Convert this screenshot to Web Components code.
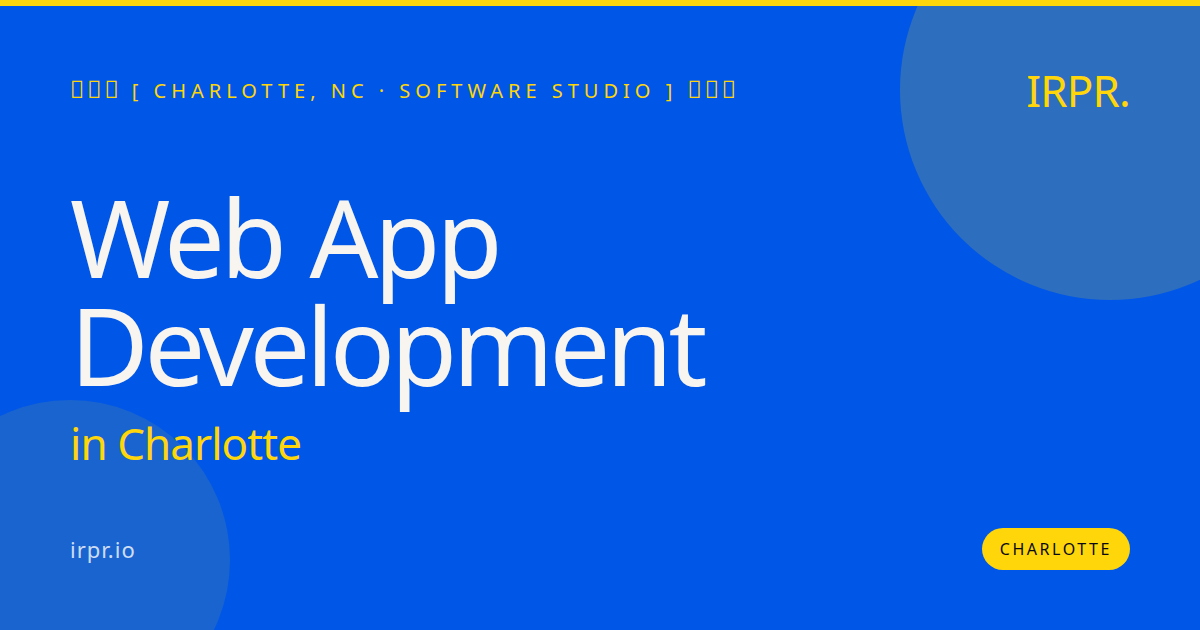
<!DOCTYPE html>
<html>
<head>
<meta charset="utf-8">
<style>
  html, body { margin: 0; padding: 0; }
  body { width: 1200px; height: 630px; overflow: hidden; font-family: "Noto Sans", sans-serif; }
</style>
</head>
<body>
<og-card>
  <og-eyebrow slot="eyebrow"><span>&#xE000;&#xE000;&#xE000;</span> [ CHARLOTTE, NC · SOFTWARE STUDIO ] <span>&#xE000;&#xE000;&#xE000;</span></og-eyebrow>
  <og-logo slot="logo">IRPR.</og-logo>
  <og-title slot="title" sub="in Charlotte">Web App<br>Development</og-title>
  <og-domain slot="domain">irpr.io</og-domain>
  <og-pill slot="pill">CHARLOTTE</og-pill>
</og-card>
<script>
class OgCard extends HTMLElement {
  constructor() {
    super();
    this.attachShadow({ mode: 'open' });
    this.shadowRoot.innerHTML = `
      <style>
        :host {
          display: flex;
          flex-direction: column;
          position: relative;
          box-sizing: border-box;
          width: 1200px;
          height: 630px;
          overflow: hidden;
          background: #0057e7;
          border-top: 6px solid #ffd60a;
          padding: 54px 70px 60px 70px;
        }
        .circle { position: absolute; border-radius: 50%; }
        .one { width: 420px; height: 420px; top: -126px; right: -120px; background: rgba(255, 214, 10, 0.18); }
        .two { width: 320px; height: 320px; bottom: -90px; left: -90px; background: rgba(255, 214, 10, 0.1); }
        .top, .bottom { display: flex; justify-content: space-between; align-items: center; position: relative; }
        .middle { flex: 1; display: flex; align-items: center; position: relative; padding-top: 8px; }
      </style>
      <div class="circle one"></div>
      <div class="circle two"></div>
      <div class="top"><slot name="eyebrow"></slot><slot name="logo"></slot></div>
      <div class="middle"><slot name="title"></slot></div>
      <div class="bottom"><slot name="domain"></slot><slot name="pill"></slot></div>
    `;
  }
}

class OgEyebrow extends HTMLElement {
  constructor() {
    super();
    this.attachShadow({ mode: 'open' });
    this.shadowRoot.innerHTML = `
      <style>
        :host { display: block; font-size: 20px; line-height: 27px; letter-spacing: 5px; color: #ffd60a; white-space: nowrap; }
        ::slotted(span) { font-size: 24px; line-height: 1; letter-spacing: 2.8px; }
      </style>
      <slot></slot>
    `;
  }
}

class OgLogo extends HTMLElement {
  constructor() {
    super();
    this.attachShadow({ mode: 'open' });
    this.shadowRoot.innerHTML = `
      <style>
        :host { display: block; font-size: 44px; letter-spacing: -0.88px; color: #ffd60a; line-height: 60px; }
      </style>
      <slot></slot>
    `;
  }
}

class OgTitle extends HTMLElement {
  constructor() {
    super();
    this.attachShadow({ mode: 'open' });
    const sub = this.getAttribute('sub') || '';
    this.shadowRoot.innerHTML = `
      <style>
        :host { display: block; color: #f8f5f0; }
        h1 { margin: 0; font-size: 108px; font-weight: 400; line-height: 1; letter-spacing: -4.32px; word-spacing: 3px; }
        p { margin: 14px 0 0; font-size: 44px; line-height: 60px; letter-spacing: -0.95px; color: #ffd60a; }
      </style>
      <h1><slot></slot></h1>
      <p>${sub}</p>
    `;
  }
}

class OgDomain extends HTMLElement {
  constructor() {
    super();
    this.attachShadow({ mode: 'open' });
    this.shadowRoot.innerHTML = `
      <style>
        :host { display: block; font-size: 22px; letter-spacing: 1px; color: rgba(255, 255, 255, 0.8); }
      </style>
      <slot></slot>
    `;
  }
}

class OgPill extends HTMLElement {
  constructor() {
    super();
    this.attachShadow({ mode: 'open' });
    this.shadowRoot.innerHTML = `
      <style>
        :host {
          display: block;
          background: #ffd60a;
          color: #0a0a14;
          font-size: 16px;
          letter-spacing: 2.56px;
          line-height: 22px;
          padding: 10px 18px;
          border-radius: 21px;
        }
      </style>
      <slot></slot>
    `;
  }
}

customElements.define('og-card', OgCard);
customElements.define('og-eyebrow', OgEyebrow);
customElements.define('og-logo', OgLogo);
customElements.define('og-title', OgTitle);
customElements.define('og-domain', OgDomain);
customElements.define('og-pill', OgPill);
</script>
</body>
</html>
